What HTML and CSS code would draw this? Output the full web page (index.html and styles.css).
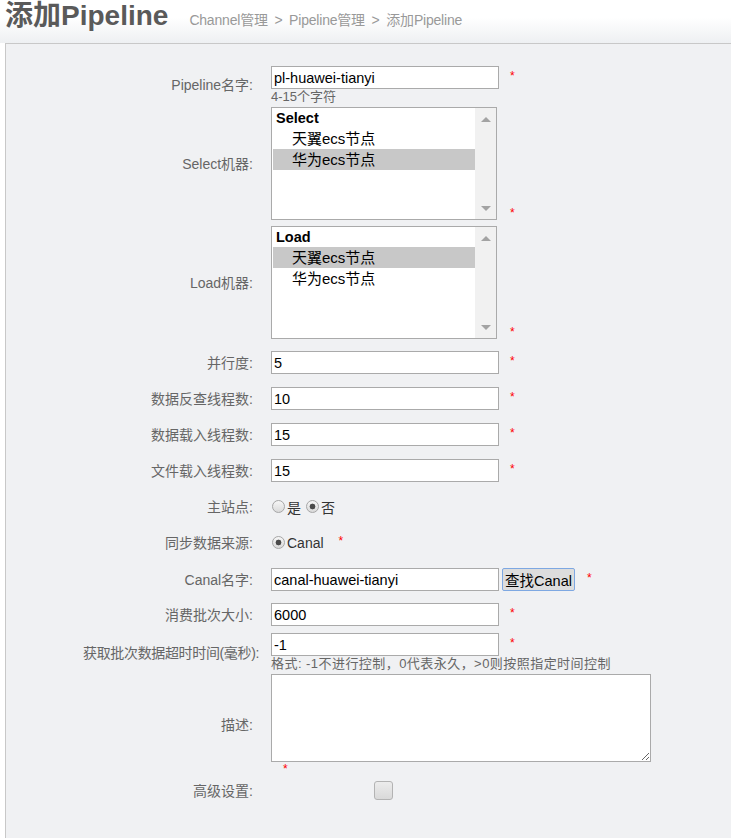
FILE: index.html
```html
<!DOCTYPE html>
<html lang="zh-CN">
<head>
<meta charset="utf-8">
<title>添加Pipeline</title>
<link rel="stylesheet" href="styles.css">
</head>
<body>
<header class="page-head">
  <h1 class="title">添加Pipeline</h1>
  <nav class="crumbs">Channel管理 <span class="sep">&gt;</span> Pipeline管理 <span class="sep">&gt;</span> 添加Pipeline</nav>
</header>
<main class="panel">
  <form class="form">
    <div class="row row-first">
      <label class="lbl">Pipeline名字:</label>
      <div class="ctl">
        <div class="field"><input class="txt" type="text" value="pl-huawei-tianyi"><span class="req">*</span></div>
        <div class="hint">4-15个字符</div>
      </div>
    </div>

    <div class="row mt3">
      <label class="lbl">Select机器:</label>
      <div class="field field-bottom">
        <div class="listbox" role="listbox">
          <div class="lb-list">
            <div class="lb-group">Select</div>
            <div class="lb-opt">天翼ecs节点</div>
            <div class="lb-opt is-selected">华为ecs节点</div>
          </div>
          <div class="lb-scroll"><span class="arr arr-up"></span><span class="arr arr-down"></span></div>
        </div>
        <span class="req req-lb">*</span>
      </div>
    </div>

    <div class="row mt6">
      <label class="lbl">Load机器:</label>
      <div class="field field-bottom">
        <div class="listbox" role="listbox">
          <div class="lb-list">
            <div class="lb-group">Load</div>
            <div class="lb-opt is-selected">天翼ecs节点</div>
            <div class="lb-opt">华为ecs节点</div>
          </div>
          <div class="lb-scroll"><span class="arr arr-up"></span><span class="arr arr-down"></span></div>
        </div>
        <span class="req req-lb">*</span>
      </div>
    </div>

    <div class="row mt12">
      <label class="lbl">并行度:</label>
      <div class="field"><input class="txt" type="text" value="5"><span class="req">*</span></div>
    </div>
    <div class="row">
      <label class="lbl">数据反查线程数:</label>
      <div class="field"><input class="txt" type="text" value="10"><span class="req">*</span></div>
    </div>
    <div class="row">
      <label class="lbl">数据载入线程数:</label>
      <div class="field"><input class="txt" type="text" value="15"><span class="req">*</span></div>
    </div>
    <div class="row">
      <label class="lbl">文件载入线程数:</label>
      <div class="field"><input class="txt" type="text" value="15"><span class="req">*</span></div>
    </div>

    <div class="row">
      <label class="lbl">主站点:</label>
      <div class="field field-h">
        <label class="opt"><input class="radio" type="radio" name="master">是</label>
        <label class="opt opt-next"><input class="radio" type="radio" name="master" checked>否</label>
      </div>
    </div>

    <div class="row">
      <label class="lbl">同步数据来源:</label>
      <div class="field field-h">
        <label class="opt"><input class="radio" type="radio" name="source" checked>Canal</label>
        <span class="req req-wide">*</span>
      </div>
    </div>

    <div class="row mt14">
      <label class="lbl">Canal名字:</label>
      <div class="field"><input class="txt" type="text" value="canal-huawei-tianyi"><button class="btn" type="button">查找Canal</button><span class="req req-btn">*</span></div>
    </div>

    <div class="row mt12">
      <label class="lbl">消费批次大小:</label>
      <div class="field"><input class="txt" type="text" value="6000"><span class="req">*</span></div>
    </div>

    <div class="row mt7">
      <label class="lbl lbl-long">获取批次数据超时时间(毫秒):</label>
      <div class="ctl">
        <div class="field"><input class="txt" type="text" value="-1"><span class="req">*</span></div>
        <div class="hint hint-wide">格式: -1不进行控制，0代表永久，&gt;0则按照指定时间控制</div>
      </div>
    </div>

    <div class="row mt2">
      <label class="lbl">描述:</label>
      <div class="ctl">
        <textarea class="area"></textarea>
        <div class="req req-under">*</div>
      </div>
    </div>

    <div class="row mt6">
      <label class="lbl">高级设置:</label>
      <div class="field field-auto"><input class="check" type="checkbox"></div>
    </div>
  </form>
</main>
</body>
</html>
```
FILE: styles.css
```css
html, body {
  margin: 0;
  padding: 0;
  background: #ffffff;
}
body {
  font-family: "Liberation Sans", "Noto Sans CJK SC", sans-serif;
  color: #333;
  height: 838px;
  overflow: hidden;
}
.page-head {
  height: 43px;
  box-sizing: border-box;
  display: flex;
  align-items: baseline;
  padding: 0 0 0 5px;
  background: linear-gradient(#ffffff 0%, #ffffff 40%, #eef0f2 100%);
}
.title {
  margin: 0;
  font-size: 28px;
  line-height: 32px;
  font-weight: bold;
  color: #5a5a5a;
}
.crumbs {
  margin-left: 21px;
  font-size: 14px;
  color: #999;
  letter-spacing: -0.2px;
}
.sep {
  margin: 0 3px;
}
.panel {
  margin-left: 5px;
  border-top: 1px solid #c8c8c8;
  border-left: 1px solid #c8c8c8;
  background: #f0f1f3;
  height: 800px;
}
.form {
  padding-top: 22px;
  margin: 0;
}
.row {
  display: grid;
  grid-template-columns: 247px 1fr;
  column-gap: 18px;
  align-items: center;
  margin-top: 13px;
}
.row-first { margin-top: 0; }
.mt2 { margin-top: 2px; }
.mt3 { margin-top: 3px; }
.mt6 { margin-top: 6px; }
.mt7 { margin-top: 7px; }
.mt8 { margin-top: 8px; }
.mt12 { margin-top: 12px; }
.mt14 { margin-top: 14px; }
.lbl {
  text-align: right;
  font-size: 14px;
  line-height: 16px;
  color: #666;
  white-space: nowrap;
}
.lbl-long {
  margin-right: -6px;
  letter-spacing: -0.35px;
}
.ctl {
  display: flex;
  flex-direction: column;
  align-items: flex-start;
}
.field {
  display: flex;
  align-items: center;
  height: 23px;
}
.field-auto {
  height: auto;
}
.field-bottom {
  align-items: flex-end;
  height: auto;
}
.txt {
  box-sizing: border-box;
  width: 228px;
  height: 23px;
  margin: 0;
  padding: 0 2px;
  border: 1px solid #aaa;
  background: #fff;
  font-family: "Liberation Sans", "Noto Sans CJK SC", sans-serif;
  font-size: 14.5px;
  color: #000;
  outline: none;
}
.req {
  margin-left: 11px;
  color: #f00;
  font-size: 12px;
  line-height: 12px;
  align-self: center;
  margin-top: -4px;
}
.req-lb {
  align-self: flex-end;
  margin-left: 13px;
  margin-top: 0;
  margin-bottom: 1px;
}
.req-wide { margin-left: 15px; }
.req-btn { margin-left: 12px; }
.req-under {
  align-self: flex-start;
  margin: 1px 0 0 12px;
}
.hint {
  font-size: 13px;
  line-height: 15px;
  color: #666;
}
.hint-wide {
  line-height: 16px;
  letter-spacing: 0.45px;
}
.listbox {
  box-sizing: border-box;
  width: 226px;
  height: 113px;
  border: 1px solid #aaa;
  background: #fff;
  display: flex;
}
.lb-list {
  flex: 1;
  padding: 0 0 0 1px;
  font-size: 15px;
  color: #000;
}
.lb-group {
  height: 20px;
  line-height: 20px;
  padding-left: 3px;
  font-weight: bold;
  font-size: 14.5px;
}
.lb-opt {
  height: 21px;
  line-height: 21px;
  padding-left: 19px;
}
.lb-opt.is-selected {
  background: #c8c8c8;
}
.lb-scroll {
  width: 21px;
  background: #f1f1f1;
  display: flex;
  flex-direction: column;
  justify-content: space-between;
  align-items: center;
  padding: 9px 0 8px;
  box-sizing: border-box;
}
.arr {
  width: 0;
  height: 0;
  border-left: 5px solid transparent;
  border-right: 5px solid transparent;
}
.arr-up { border-bottom: 5px solid #a3a3a3; }
.arr-down { border-top: 5px solid #a3a3a3; }
.opt {
  display: flex;
  align-items: center;
  font-size: 14px;
  color: #333;
}
.opt-next { margin-left: 4px; }
.radio {
  appearance: none;
  -webkit-appearance: none;
  box-sizing: border-box;
  width: 13px;
  height: 13px;
  margin: 0 2px 0 1px;
  border: 1px solid #a6a6a6;
  border-radius: 50%;
  background: linear-gradient(#f6f6f6, #dadada);
}
.radio:checked {
  background: radial-gradient(circle, #4a4a4a 0 2.6px, transparent 3.2px), linear-gradient(#f6f6f6, #dadada);
}
.btn {
  box-sizing: border-box;
  height: 23px;
  width: 73px;
  margin: 0 0 0 3px;
  padding: 0;
  border: 1px solid #7ea8e2;
  border-radius: 2px;
  background: #dddddd;
  font-family: "Liberation Sans", "Noto Sans CJK SC", sans-serif;
  font-size: 14.5px;
  color: #000;
}
.area {
  box-sizing: border-box;
  display: block;
  width: 380px;
  height: 88px;
  margin: 0;
  border: 1px solid #aaa;
  background: #fff;
  outline: none;
}
.check {
  appearance: none;
  -webkit-appearance: none;
  box-sizing: border-box;
  width: 19px;
  height: 19px;
  margin: 0 0 0 103px;
  border: 1px solid #b3b3b3;
  border-radius: 3px;
  background: linear-gradient(#ececec, #d9d9d9);
}
```
